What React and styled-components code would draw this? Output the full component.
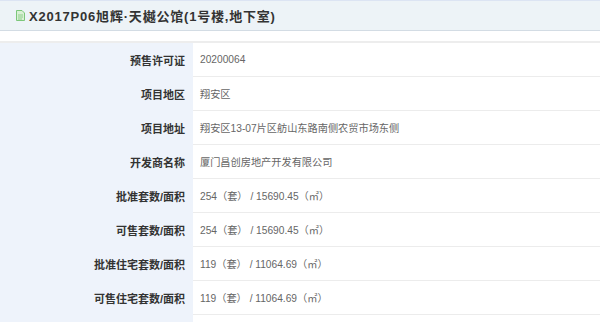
import React from "react"
import styled, { createGlobalStyle } from "styled-components"

// Global
const GlobalStyle = createGlobalStyle`
  html, body {
    margin: 0;
    padding: 0;
    background: #fff;
  }
  body {
    font-family: "Liberation Sans", "Noto Sans CJK SC", sans-serif;
    overflow: hidden;
  }
`

// Styles
const Page = styled.div`
  width: 600px;
  height: 322px;
  overflow: hidden;
`

const Header = styled.div`
  align-items: center;
  background: #edf3f7;
  border-bottom: 1px solid #d3dce4;
  border-top: 1px solid #dce4f3;
  box-sizing: border-box;
  display: flex;
  gap: 4px;
  height: 31px;
  padding-left: 16px;
`

const Title = styled.h1`
  color: #333;
  font-size: 13px;
  font-weight: bold;
  letter-spacing: 0.8px;
  margin: 0;
`

const Table = styled.div`
  border-top: 2px solid #ededed;
  margin-top: 10px;
`

const Row = styled.div`
  display: grid;
  grid-template-columns: 193px 1fr;
  height: 34px;
`

const Label = styled.div`
  align-items: center;
  background: #eef3fb;
  color: #333;
  display: flex;
  font-size: 11px;
  font-weight: bold;
  justify-content: flex-end;
  padding-right: 8px;
`

const Value = styled.div`
  align-items: center;
  border-bottom: 1px solid #ececec;
  color: #666;
  display: flex;
  font-size: 10.2px;
  padding-left: 7px;
`

const DocIcon = () => (
  <svg width="9" height="11" viewBox="0 0 9 11">
    <path d="M0.5 0.5H6L8.5 3V10.5H0.5Z" fill="#d9f0d5" stroke="#7cc77a" />
    <path d="M2 5H7M2 7H7M2 9H6" stroke="#7cc77a" strokeWidth="0.8" />
  </svg>
)

const rows = [
  ["预售许可证", "20200064"],
  ["项目地区", "翔安区"],
  ["项目地址", "翔安区13-07片区舫山东路南侧农贸市场东侧"],
  ["开发商名称", "厦门昌创房地产开发有限公司"],
  ["批准套数/面积", "254（套） / 15690.45（㎡）"],
  ["可售套数/面积", "254（套） / 15690.45（㎡）"],
  ["批准住宅套数/面积", "119（套） / 11064.69（㎡）"],
  ["可售住宅套数/面积", "119（套） / 11064.69（㎡）"],
  ["", ""],
]

const App = () => (
  <Page>
    <GlobalStyle />
    <Header>
      <DocIcon />
      <Title>X2017P06旭辉·天樾公馆(1号楼,地下室)</Title>
    </Header>
    <Table>
      {rows.map(([label, value], i) => (
        <Row key={i}>
          <Label>{label}</Label>
          <Value>{value}</Value>
        </Row>
      ))}
    </Table>
  </Page>
)

export default App
